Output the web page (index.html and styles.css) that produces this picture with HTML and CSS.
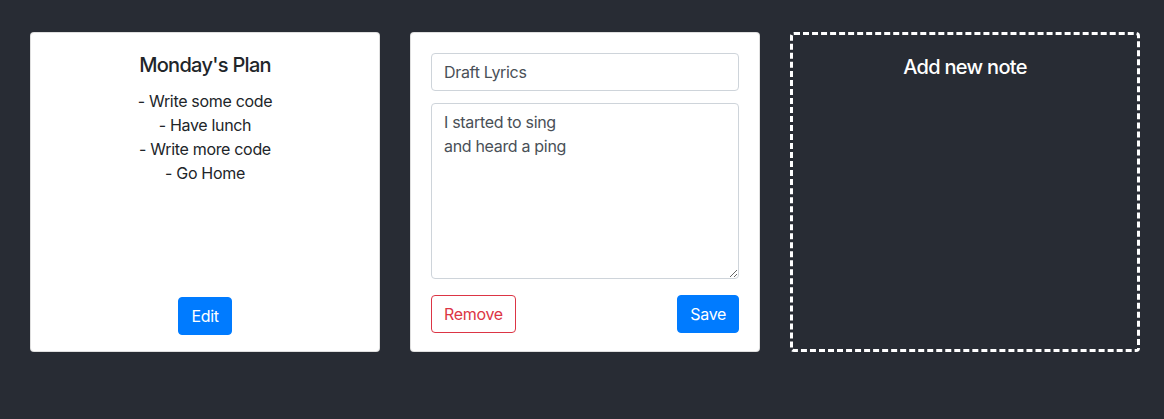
FILE: index.html
```html
<!DOCTYPE html>
<html lang="en">
<head>
<meta charset="utf-8">
<title>Notes</title>
<link rel="stylesheet" href="styles.css">
</head>
<body>
<div class="board">
  <div class="note">
    <div class="note-body view">
      <h5 class="note-title">Monday's Plan</h5>
      <p class="note-text">- Write some code
- Have lunch
- Write more code
- Go Home</p>
      <button class="btn btn-primary push">Edit</button>
    </div>
  </div>
  <div class="note">
    <div class="note-body edit">
      <input class="field" type="text" value="Draft Lyrics">
      <textarea class="field area">I started to sing
and heard a ping</textarea>
      <div class="actions">
        <button class="btn btn-outline-danger">Remove</button>
        <button class="btn btn-primary">Save</button>
      </div>
    </div>
  </div>
  <div class="note add">
    <div class="note-body">
      <h5 class="note-title light">Add new note</h5>
    </div>
  </div>
</div>
</body>
</html>
```

FILE: styles.css
```css
* { box-sizing: border-box; }
html, body { margin: 0; }
body {
  background: #282c34;
  font-family: Inter, "Noto Sans", "Liberation Sans", sans-serif;
  font-size: 16px;
  line-height: 1.5;
  letter-spacing: -0.02em;
  color: #212529;
  min-height: 419px;
  overflow: hidden;
}
.board {
  display: flex;
  gap: 30px;
  padding: 32px 30px;
}
.note {
  flex: none;
  width: 350px;
  height: 320px;
  background: #fff;
  border: 1px solid rgba(0,0,0,.125);
  border-radius: 4px;
  display: flex;
  flex-direction: column;
}
.note-body {
  flex: 1;
  display: flex;
  flex-direction: column;
  padding: 20px 20px 16px;
}
.view { align-items: center; text-align: center; }
.note-title {
  margin: 0 0 12px;
  font-size: 20px;
  font-weight: 500;
  line-height: 1.2;
  letter-spacing: -0.035em;
  text-align: center;
}
.note-text {
  margin: 0;
  white-space: pre-line;
}
.push { margin-top: auto; }
.btn {
  font-family: inherit;
  font-size: 16px;
  line-height: 24px;
  letter-spacing: -0.02em;
  padding: 6px 12px;
  border: 1px solid transparent;
  border-radius: 4px;
  background: transparent;
  cursor: pointer;
}
.btn-primary { background: #007bff; border-color: #007bff; color: #fff; }
.btn-outline-danger { color: #dc3545; border-color: #dc3545; background: #fff; }
.edit { padding-bottom: 18px; }
.field {
  display: block;
  width: 100%;
  height: 38px;
  padding: 6px 12px;
  font-family: inherit;
  font-size: 16px;
  line-height: 24px;
  letter-spacing: -0.02em;
  color: #495057;
  background: #fff;
  border: 1px solid #ced4da;
  border-radius: 4px;
  margin: 0;
}
.area {
  height: 176px;
  margin-top: 12px;
  resize: vertical;
}
.actions {
  display: flex;
  justify-content: space-between;
  margin-top: 16px;
}
.add {
  background: transparent;
  border: 3px dashed #fff;
}
.add .note-body { padding-top: 20px; }
.light { color: #fff; }
```
